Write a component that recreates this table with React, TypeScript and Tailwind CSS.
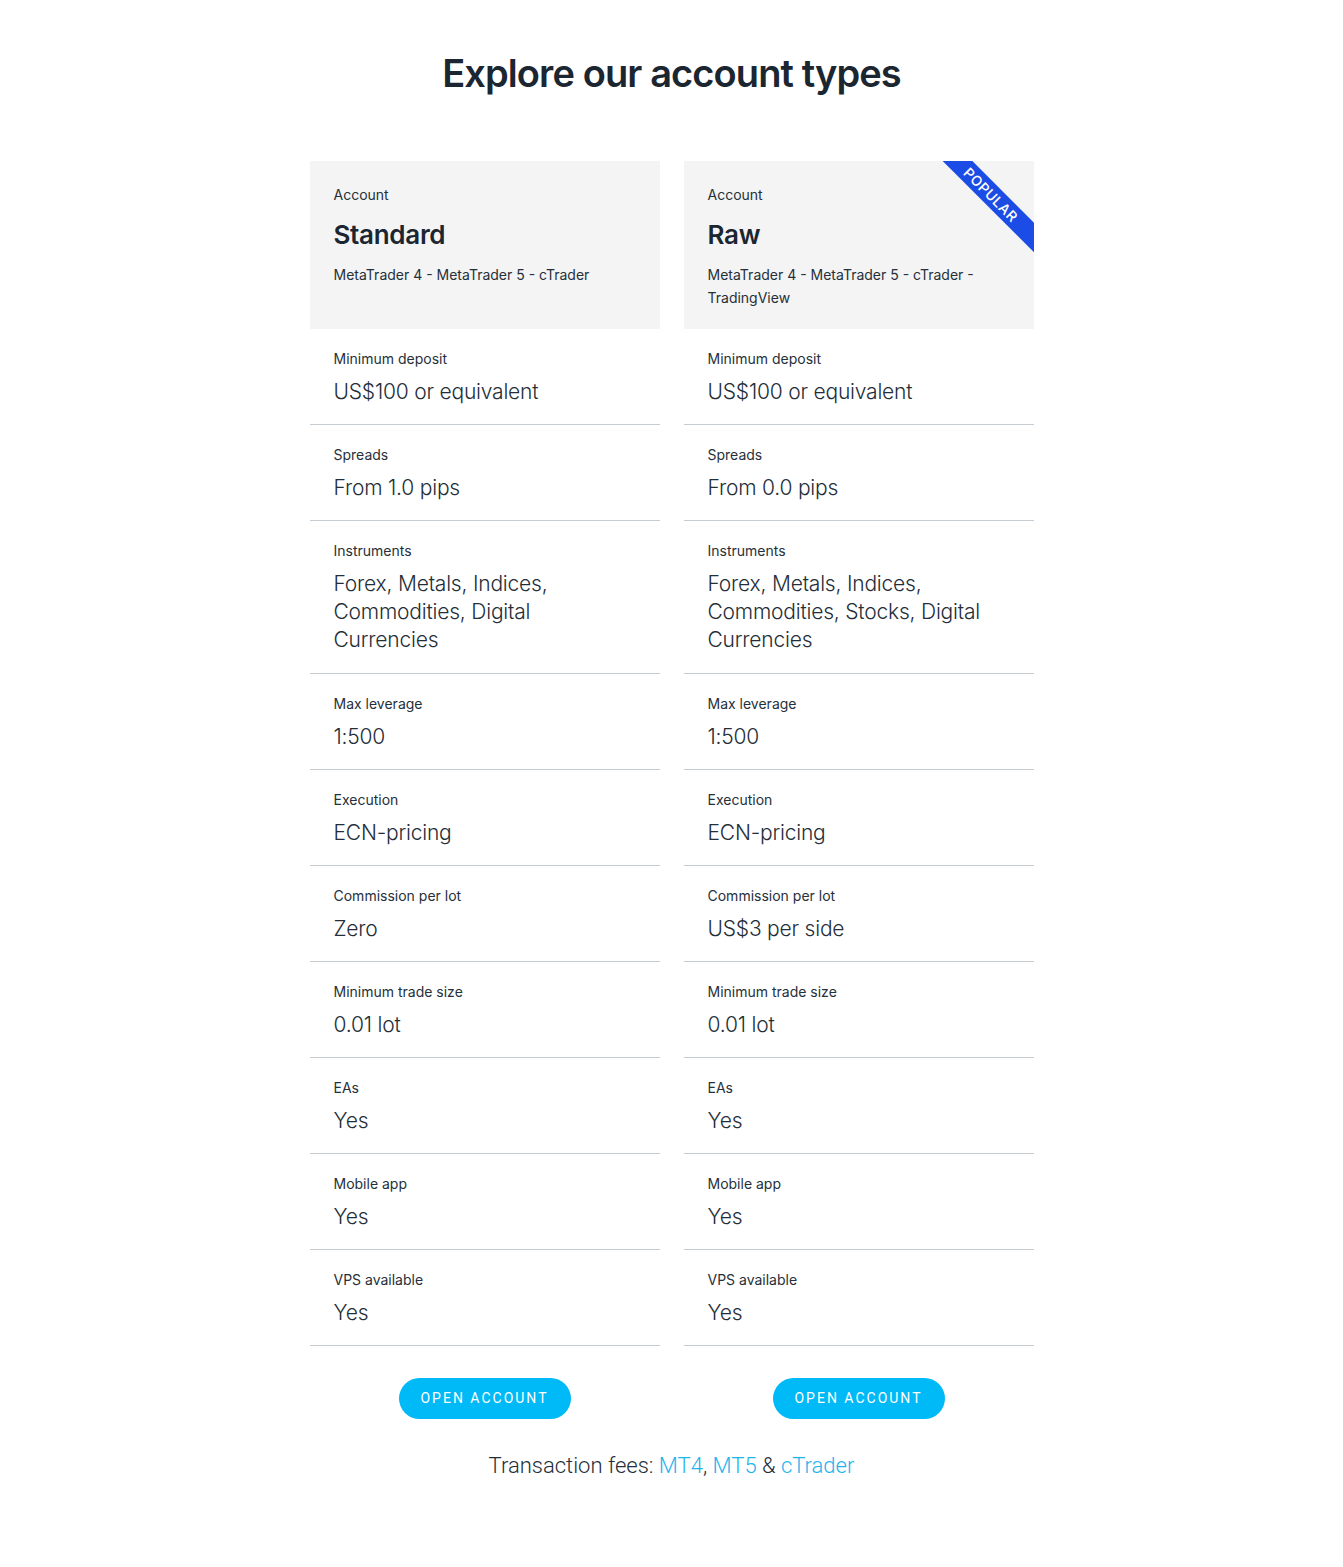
import { FC } from 'react';

type Row = { label: string; value: string };

type Account = {
  name: string;
  platforms: string;
  popular?: boolean;
  rows: Row[];
};

const accounts: Account[] = [
  {
    name: 'Standard',
    platforms: 'MetaTrader 4 - MetaTrader 5 - cTrader',
    rows: [
      { label: 'Minimum deposit', value: 'US$100 or equivalent' },
      { label: 'Spreads', value: 'From 1.0 pips' },
      { label: 'Instruments', value: 'Forex, Metals, Indices, Commodities, Digital Currencies' },
      { label: 'Max leverage', value: '1:500' },
      { label: 'Execution', value: 'ECN-pricing' },
      { label: 'Commission per lot', value: 'Zero' },
      { label: 'Minimum trade size', value: '0.01 lot' },
      { label: 'EAs', value: 'Yes' },
      { label: 'Mobile app', value: 'Yes' },
      { label: 'VPS available', value: 'Yes' },
    ],
  },
  {
    name: 'Raw',
    platforms: 'MetaTrader 4 - MetaTrader 5 - cTrader - TradingView',
    popular: true,
    rows: [
      { label: 'Minimum deposit', value: 'US$100 or equivalent' },
      { label: 'Spreads', value: 'From 0.0 pips' },
      { label: 'Instruments', value: 'Forex, Metals, Indices, Commodities, Stocks, Digital Currencies' },
      { label: 'Max leverage', value: '1:500' },
      { label: 'Execution', value: 'ECN-pricing' },
      { label: 'Commission per lot', value: 'US$3 per side' },
      { label: 'Minimum trade size', value: '0.01 lot' },
      { label: 'EAs', value: 'Yes' },
      { label: 'Mobile app', value: 'Yes' },
      { label: 'VPS available', value: 'Yes' },
    ],
  },
];

const AccountCard: FC<{ account: Account }> = ({ account }) => {
  return (
    <div className="w-[350px] flex flex-col">
      <div className="relative overflow-hidden bg-[#f4f4f4] h-[168px] px-6 pt-[24px]">
        {account.popular && (
          <div className="absolute left-[232px] top-[23px] w-[150px] h-[21px] rotate-45 bg-[#1c4ce6] text-white text-[14px] font-medium leading-[21px] text-center tracking-[0.5px]">
            POPULAR
          </div>
        )}
        <p className="text-[14px] leading-[20px] text-[#26303a]">Account</p>
        <h2 className="mt-[14px] text-[26px] leading-[32px] font-semibold text-[#1b2631] tracking-[-0.3px]">
          {account.name}
        </h2>
        <p className="mt-[12px] text-[14px] leading-[23px] text-[#26303a] pr-8">
          {account.platforms}
        </p>
      </div>
      {account.rows.map((row) => (
        <div
          key={row.label}
          className={
            row.label === 'Instruments'
              ? 'border-b border-[#c6cdd2] pl-6 pr-10 pt-[20px] pb-[19px]'
              : 'border-b border-[#c6cdd2] pl-6 pr-10 pt-[20px] pb-[18px]'
          }
        >
          <p className="text-[14px] leading-[20px] text-[#26303a]">{row.label}</p>
          <p className="mt-[9px] text-[21px] leading-[28px] font-light text-[#242e38] tracking-[-0.2px]">
            {row.value}
          </p>
        </div>
      ))}
      <div className="flex justify-center pt-[32px]">
        <button
          type="button"
          className="h-[41px] w-[172px] rounded-full bg-[#00b9f7] text-white text-[14px] font-normal tracking-[2px] font-['Roboto',sans-serif]"
        >
          OPEN ACCOUNT
        </button>
      </div>
    </div>
  );
};

const App: FC = () => {
  return (
    <div className="min-h-screen bg-white font-['Inter',sans-serif] pt-[48px] pb-[80px]">
      <h1 className="text-center text-[38px] leading-[50px] font-semibold text-[#1b2631] tracking-[-0.9px]">
        Explore our account types
      </h1>
      <div className="mt-[63px] flex justify-center gap-6">
        {accounts.map((a) => (
          <AccountCard key={a.name} account={a} />
        ))}
      </div>
      <p className="mt-[32px] text-center text-[22px] leading-[30px] font-light text-[#242e38] font-['Roboto',sans-serif]">
        Transaction fees:{' '}
        <a className="text-[#1fb4ec]">MT4</a>,{' '}
        <a className="text-[#1fb4ec]">MT5</a> &amp;{' '}
        <a className="text-[#1fb4ec]">cTrader</a>
      </p>
    </div>
  );
};

export default App;
